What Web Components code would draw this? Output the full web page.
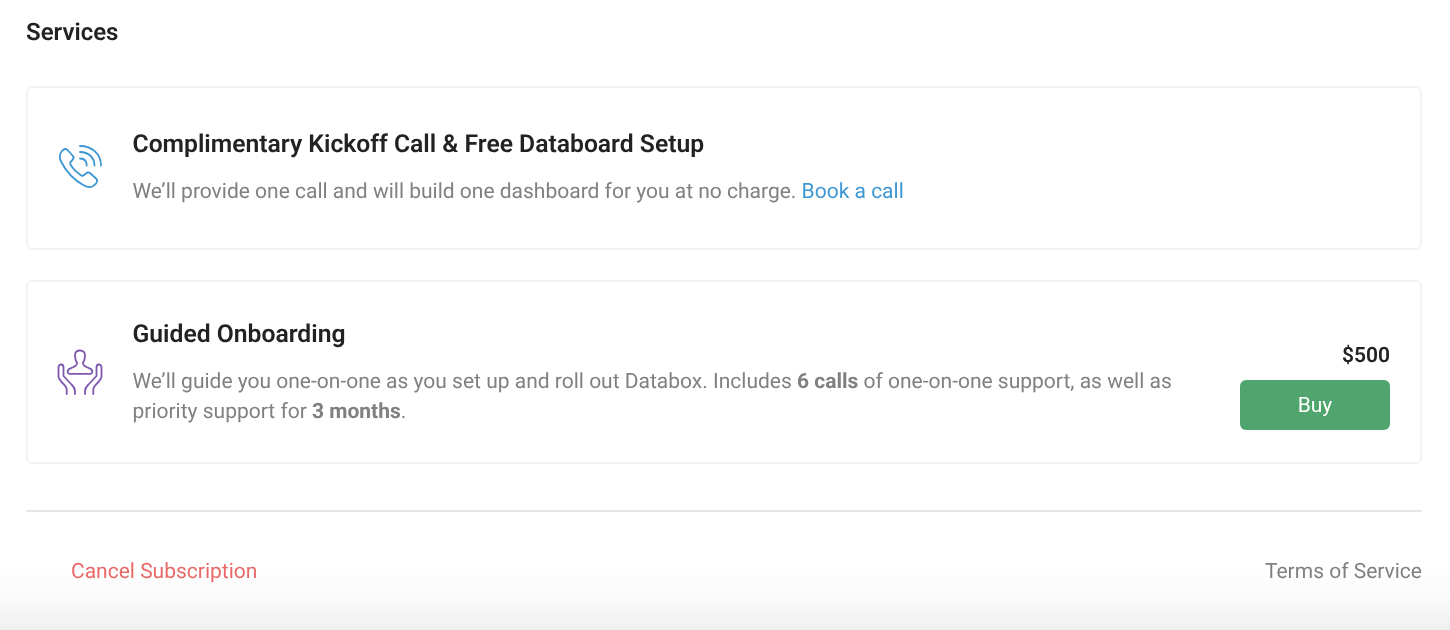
<!DOCTYPE html>
<html>
<head>
<meta charset="utf-8">
<style>
html, body { margin: 0; padding: 0; background: #fff; overflow: hidden; }
</style>
</head>
<body>
<services-page></services-page>

<template id="service-card-tpl">
<style>
:host {
    display: flex;
    box-sizing: border-box;
    align-items: center;
    border: 2px solid #f3f3f3;
    border-radius: 6px;
    padding: 0 30px 0 29px;
    font-family: Roboto, sans-serif;
    color: #808080;
}
#icon { flex: 0 0 46px; display: flex; margin-right: 29.500px; }
#body { flex: 1; margin-top: var(--body-shift, 0); }
h3 {
    margin: 0 0 16px 0;
    font-size: 24.700px;
    line-height: 32px;
    font-weight: 600;
    color: #222;
}
p {
    margin: 0;
    font-size: 21px;
    line-height: 30px;
    color: #808080;
}
</style>
<div id="icon"><slot name="icon"></slot></div>
<div id="body">
    <h3><slot name="title"></slot></h3>
    <p><slot></slot></p>
</div>
<slot name="aside"></slot>
</template>

<template id="buy-box-tpl">
<style>
:host {
    display: block;
    flex: 0 0 150px;
    align-self: flex-end;
    margin: 0 0 32px 50px;
    font-family: Roboto, sans-serif;
}
#price {
    text-align: right;
    font-size: 21px;
    line-height: 26px;
    font-weight: 600;
    color: #222;
    margin-bottom: 11px;
}
button {
    display: block;
    width: 150px;
    height: 50px;
    border: none;
    border-radius: 6px;
    background: #50a56f;
    color: #fff;
    font-family: inherit;
    font-size: 21px;
    padding: 0;
}
</style>
<div id="price"><slot name="price"></slot></div>
<button><slot></slot></button>
</template>

<template id="services-page-tpl">
<style>
:host {
    display: block;
    box-sizing: border-box;
    width: 1450px;
    height: 630px;
    padding: 0 28px 0 26px;
    overflow: hidden;
    font-family: Roboto, sans-serif;
    text-rendering: geometricPrecision;
    will-change: transform;
    background: linear-gradient(to bottom, rgba(239,239,239,0) 0, rgba(239,239,239,0) 565px, rgba(239,239,239,.3) 600px, #efefef 630px);
}
h2 {
    margin: 0;
    padding-top: 17px;
    font-size: 24px;
    line-height: 30px;
    font-weight: 600;
    color: #222;
    margin-bottom: 39px;
}
#cards { display: flex; flex-direction: column; gap: 30px; }
service-card.one { height: 164px; }
service-card.two { height: 184px; --body-shift: 2px; }
a { color: #3d97d3; text-decoration: none; }
b { font-weight: 700; }
hr {
    border: none;
    height: 2px;
    background: #e6e6e6;
    margin: 46px 0 0 0;
}
#foot {
    display: flex;
    justify-content: space-between;
    padding: 46px 0 0 45px;
    font-size: 21px;
    line-height: 28px;
}
#cancel { color: #e86a68; }
#terms { color: #808080; }
</style>
<h2>Services</h2>
<div id="cards">
    <service-card class="one">
        <svg slot="icon" width="46" height="46" viewBox="0 0 46 46" fill="none" stroke="#3d97d3" stroke-width="1.800" stroke-linecap="round" stroke-linejoin="round">
            <path d="M5 6 C7 3.500 9 3.500 10.500 5 L15.500 10.500 C17 12 17 13.500 15.500 15 L13.500 17 C13 18 13 19 14 20.500 C16.500 24.500 19.500 27.500 23.500 30 C25 31 26 31 27 30 L29 28.500 C30.500 27 32 27 33.500 28.500 L39 33.500 C40.500 35 40.500 37 38.500 39 C35.500 42.500 31.500 43 27 40.500 C18 35.500 9 26.500 4 16.500 C2 12.500 2.500 9 5 6 Z"/>
            <path d="M23 13.500 C27.500 13.500 29.700 16.500 29.700 20.500"/>
            <path d="M23 7 C31.500 7 37.500 12.500 37.500 20.500"/>
            <path d="M23 1 C35 1 44 9 44 20.500"/>
        </svg>
        <span slot="title">Complimentary Kickoff Call &amp; Free Databoard Setup</span>
        We’ll provide one call and will build one dashboard for you at no charge. <a href="#">Book a call</a>
    </service-card>
    <service-card class="two">
        <svg slot="icon" width="46" height="46" viewBox="0 0 46 46" fill="none" stroke="#7f57ad" stroke-width="1.800" stroke-linecap="round" stroke-linejoin="round">
            <path d="M23 1.500 C19.500 1.500 18 3.500 18 6.500 C18 10 19 12.500 20 14 C20 16.500 18 17.500 15.500 18.500 C13.500 19.300 11.500 20 10.800 21.500 C10.300 23 11 24.800 12.500 24.800 L33.500 24.800 C35 24.800 35.700 23 35.200 21.500 C34.500 20 32.500 19.300 30.500 18.500 C28 17.500 26 16.500 26 14 C27 12.500 28 10 28 6.500 C28 3.500 26.500 1.500 23 1.500 Z"/>
            <path d="M9.700 45 L9.700 40 C9.700 37 3 33 1.500 28 L1.500 18 C1.500 16.500 3 15.500 4 15.500 C5.500 15.500 6.500 16.500 6.500 18 L6.500 27 L15 36 C17 38 18 40 18 42 L18 45"/>
            <path d="M36.300 45 L36.300 40 C36.300 37 43 33 44.500 28 L44.500 18 C44.500 16.500 43 15.500 42 15.500 C40.500 15.500 39.500 16.500 39.500 18 L39.500 27 L31 36 C29 38 28 40 28 42 L28 45"/>
        </svg>
        <span slot="title">Guided Onboarding</span>
        We’ll guide you one-on-one as you set up and roll out Databox. Includes <b>6 calls</b> of one-on-one support, as well as priority support for <b>3 months</b>.
        <buy-box slot="aside"><span slot="price">$500</span>Buy</buy-box>
    </service-card>
</div>
<hr>
<div id="foot">
    <span id="cancel">Cancel Subscription</span>
    <span id="terms">Terms of Service</span>
</div>
</template>

<script>
class TemplatedElement extends HTMLElement {
    constructor(id) {
        super();
        this.attachShadow({mode: "open"});
        let t = document.getElementById(id);
        this.shadowRoot.appendChild(t.content.cloneNode(true));
    }
}
class ServiceCard extends TemplatedElement {
    constructor() { super("service-card-tpl"); }
}
class BuyBox extends TemplatedElement {
    constructor() { super("buy-box-tpl"); }
}
class ServicesPage extends TemplatedElement {
    constructor() { super("services-page-tpl"); }
}
customElements.define("service-card", ServiceCard);
customElements.define("buy-box", BuyBox);
customElements.define("services-page", ServicesPage);
</script>
</body>
</html>
